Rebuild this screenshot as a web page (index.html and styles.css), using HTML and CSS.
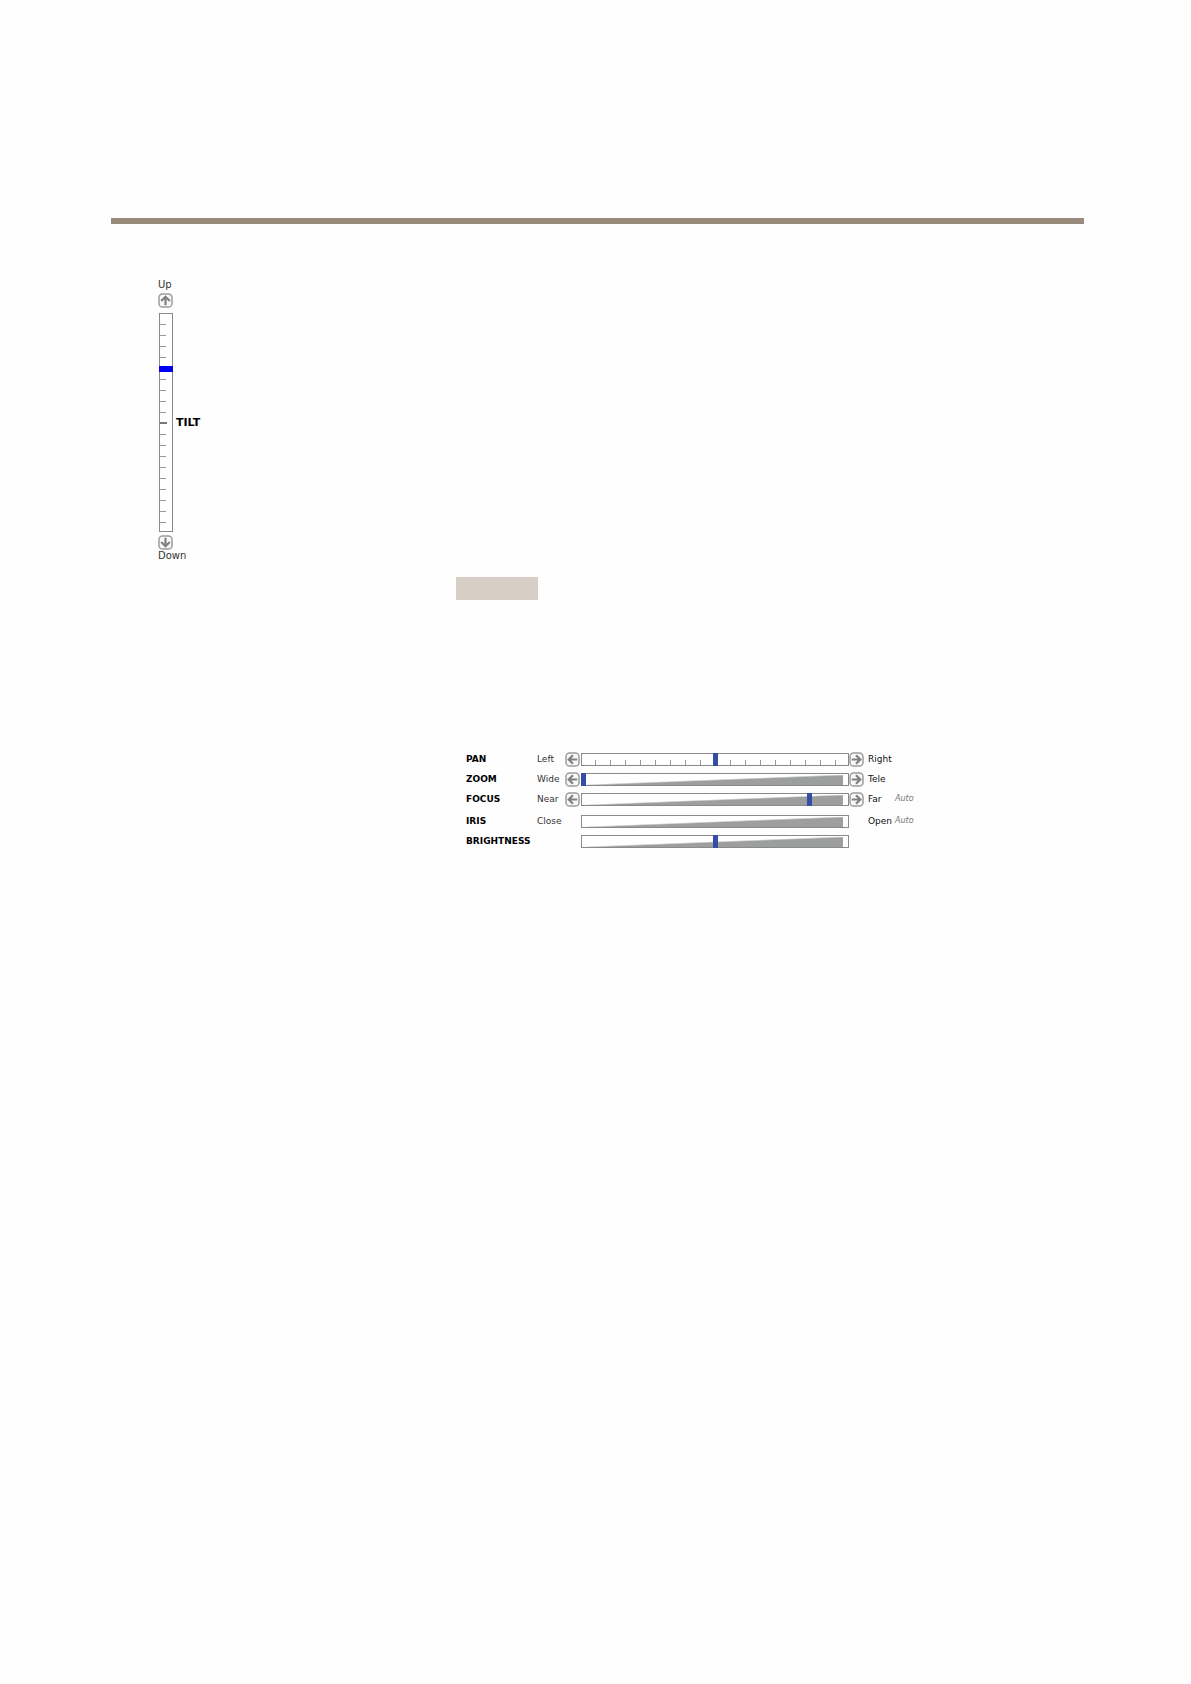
FILE: index.html
```html
<!DOCTYPE html>
<html lang="en">
<head>
  <meta charset="UTF-8">
  <title>Camera Controls</title>
  <link rel="stylesheet" href="styles.css">
</head>
<body>
  <svg class="sprite" aria-hidden="true">
    <symbol id="arrow" viewBox="0 0 15 15">
      <rect x="1" y="1" width="13" height="13" rx="3.6" fill="#f8f8f8" stroke="#9c9c9c" stroke-width="1.5"/>
      <path d="M12.2 7.5H4M8 3.2L3.7 7.5L8 11.8" fill="none" stroke="#808080" stroke-width="2.2"/>
    </symbol>
  </svg>

  <main class="page">
    <hr class="rule">

    <section class="tilt">
      <span>Up</span>
      <button type="button" class="arrow up" aria-label="Tilt up"><svg><use href="#arrow"/></svg></button>
      <div class="tilt-bar">
        <input type="range" id="tilt" class="slider vertical" min="0" max="100" value="75">
        <label for="tilt">TILT</label>
      </div>
      <button type="button" class="arrow down" aria-label="Tilt down"><svg><use href="#arrow"/></svg></button>
      <span>Down</span>
    </section>

    <div class="tag"></div>

    <section class="controls">
      <div class="row">
        <label for="pan">PAN</label>
        <span>Left</span>
        <button type="button" class="arrow" aria-label="Pan left"><svg><use href="#arrow"/></svg></button>
        <input type="range" id="pan" class="slider ticks" min="0" max="100" value="50">
        <button type="button" class="arrow right" aria-label="Pan right"><svg><use href="#arrow"/></svg></button>
        <span class="end">Right</span>
      </div>
      <div class="row">
        <label for="zoom">ZOOM</label>
        <span>Wide</span>
        <button type="button" class="arrow" aria-label="Zoom out"><svg><use href="#arrow"/></svg></button>
        <input type="range" id="zoom" class="slider wedge" min="0" max="100" value="0">
        <button type="button" class="arrow right" aria-label="Zoom in"><svg><use href="#arrow"/></svg></button>
        <span class="end">Tele</span>
      </div>
      <div class="row">
        <label for="focus">FOCUS</label>
        <span>Near</span>
        <button type="button" class="arrow" aria-label="Focus near"><svg><use href="#arrow"/></svg></button>
        <input type="range" id="focus" class="slider wedge" min="0" max="100" value="86">
        <button type="button" class="arrow right" aria-label="Focus far"><svg><use href="#arrow"/></svg></button>
        <span class="end">Far</span>
        <button type="button" class="auto">Auto</button>
      </div>
      <div class="row iris">
        <label for="iris">IRIS</label>
        <span>Close</span>
        <i></i>
        <input type="range" id="iris" class="slider wedge no-thumb" min="0" max="100">
        <i></i>
        <span class="end">Open</span>
        <button type="button" class="auto">Auto</button>
      </div>
      <div class="row">
        <label for="brightness">BRIGHTNESS</label>
        <span></span>
        <i></i>
        <input type="range" id="brightness" class="slider wedge" min="0" max="100" value="50">
      </div>
    </section>
  </main>
</body>
</html>
```
FILE: styles.css
```css
body {
  margin: 0;
  background: #fefefe;
  color: #333;
  font-family: Verdana, "DejaVu Sans", sans-serif;
  font-size: 9px;
  line-height: 12px;
}

.sprite {
  position: absolute;
  width: 0;
  height: 0;
}

.page {
  padding: 218px 107px 0 111px;
}

.rule {
  height: 6px;
  margin: 0;
  border: none;
  background: #998b7b;
}

label {
  color: #000;
  font-weight: bold;
}

button {
  padding: 0;
  border: none;
  background: none;
  font: inherit;
  cursor: pointer;
}

.arrow {
  width: 15px;
  height: 15px;
}

.arrow svg {
  display: block;
  width: 15px;
  height: 15px;
}

.right {
  transform: rotate(180deg);
}

.up {
  transform: rotate(90deg);
}

.down {
  transform: rotate(-90deg);
}

.slider {
  appearance: none;
  box-sizing: border-box;
  width: 100%;
  height: 13px;
  margin: 0;
  background-color: #fff;
  background-repeat: no-repeat;
  box-shadow: inset 0 0 0 1px #8a8a8a;
}

.slider::-webkit-slider-thumb {
  appearance: none;
  width: 5px;
  height: 13px;
  border: none;
  border-radius: 0;
  background: #344ea5;
}

.slider::-moz-range-thumb {
  width: 5px;
  height: 13px;
  border: none;
  border-radius: 0;
  background: #344ea5;
}

.no-thumb::-webkit-slider-thumb {
  visibility: hidden;
}

.no-thumb::-moz-range-thumb {
  visibility: hidden;
}

.ticks {
  background-image: linear-gradient(to right, #999 1px, transparent 1px);
  background-size: 15px 6px;
  background-position: 14px 100%;
  background-repeat: repeat-x;
}

.wedge {
  background-image: linear-gradient(to bottom right, transparent 46%, #9c9f9d 54%);
  background-size: calc(100% - 12px) 10px;
  background-position: 6px 2px;
}

.tilt {
  display: flex;
  flex-direction: column;
  align-items: flex-start;
  padding: 55px 0 0 47px;
  font-size: 10px;
}

.tilt label {
  font-size: 11px;
}

.tilt .up {
  margin: 2px 0 5px;
}

.tilt .down {
  margin-top: 3px;
}

.tilt-bar {
  display: flex;
  align-items: center;
  gap: 3px;
  padding-left: 1px;
}

.vertical {
  writing-mode: vertical-lr;
  direction: rtl;
  width: 14px;
  height: 219px;
  background-image: linear-gradient(#777, #777), linear-gradient(#999 1px, transparent 1px);
  background-size: 7px 2px, 6px 11px;
  background-position: 1px 109px, 1px 0;
  background-repeat: no-repeat, repeat-y;
}

.vertical::-webkit-slider-thumb {
  width: 14px;
  height: 6px;
  background: #0000f5;
}

.vertical::-moz-range-thumb {
  width: 14px;
  height: 6px;
  background: #0000f5;
}

.tag {
  width: 82px;
  height: 23px;
  margin: 15px 0 0 345px;
  background: #d7cec6;
}

.controls {
  display: flex;
  flex-direction: column;
  max-width: 460px;
  margin: 149px 0 0 355px;
}

.row {
  display: grid;
  grid-template-columns: 71px 28px 16px 268px 19px 27px 1fr;
  align-items: center;
  height: 20px;
}

.iris {
  margin-top: 2px;
}

.end {
  color: #111;
}

.auto {
  justify-self: start;
  color: #777;
  font-size: 8px;
  font-style: italic;
}
```
